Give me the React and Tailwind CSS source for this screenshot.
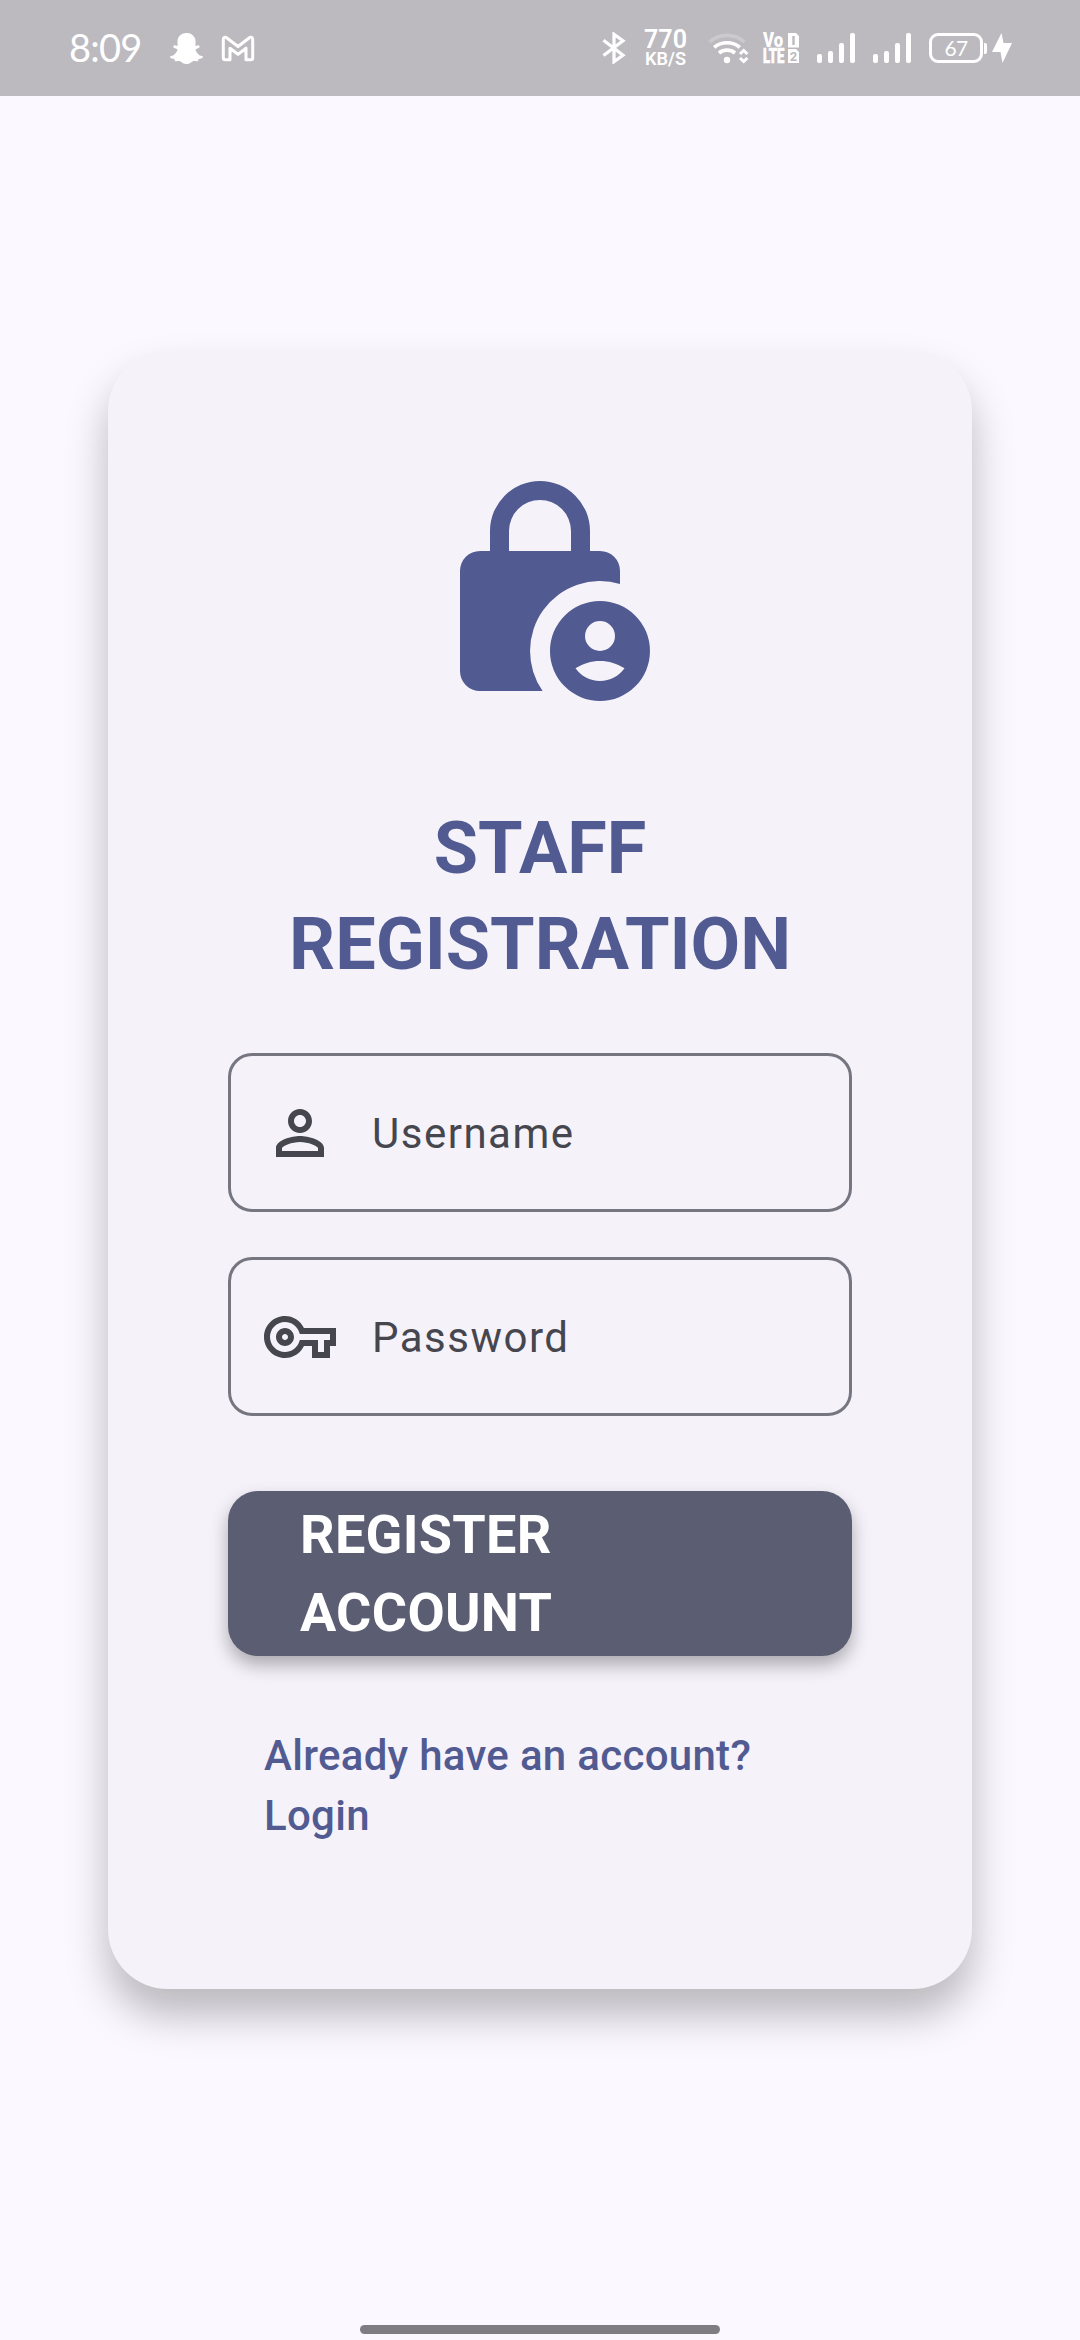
import React from "react";
import { FaSnapchatGhost } from "react-icons/fa";

function GmailIcon() {
  return (
    <svg className="ml-[18px] h-[27px] w-[34px]" viewBox="0 0 34 27" fill="none" stroke="white" strokeWidth="3" strokeLinejoin="round">
      <path d="M2.300 4.200v18.600a2 2 0 0 0 2 2H9V13.200l8 6.200 8-6.200v11.600h4.700a2 2 0 0 0 2-2V4.200c0-1.900-1.800-2.600-3.300-1.500L17 11.500 5.600 2.700C4.100 1.600 2.300 2.300 2.300 4.200z" />
    </svg>
  );
}

function BluetoothIcon() {
  return (
    <svg className="h-[32px] w-[24px]" viewBox="0 0 24 32" fill="none" stroke="white" strokeWidth="3.200">
      <path d="M1.500 8.200 21 23.200l-9 6.500V2.300l9 6.500L1.500 23.500" />
    </svg>
  );
}

function NetworkSpeed() {
  return (
    <svg className="ml-[16px] h-[40px] w-[46px] overflow-visible font-['Roboto']" viewBox="0 0 46 40" fill="white">
      <text x="2" y="20" fontSize="25" fontWeight="600" textLength="43" lengthAdjust="spacingAndGlyphs">770</text>
      <text x="3" y="37" fontSize="19" fontWeight="600" textLength="41" lengthAdjust="spacingAndGlyphs">KB/S</text>
    </svg>
  );
}

function WifiIcon() {
  return (
    <svg className="ml-[20px] h-[32px] w-[42px]" viewBox="0 0 42 32" fill="none" stroke="white" strokeWidth="3.600">
      <path d="M1.500 9.800a27 27 0 0 1 35 0" opacity=".22" />
      <path d="M6.200 15.400a20 20 0 0 1 25.600 0" />
      <path d="M11 21a12.500 12.500 0 0 1 16 0" />
      <circle cx="19" cy="28" r="3.200" fill="white" stroke="none" />
      <path d="m32 22 3.700-3.500 3.700 3.500M32 26l3.700 3.500 3.700-3.500" strokeWidth="3" />
    </svg>
  );
}

function VolteIcon() {
  return (
    <svg className="ml-[12px] h-[32px] w-[38px] overflow-visible font-['Roboto']" viewBox="0 0 38 32" fill="white">
      <g transform="translate(1 15) scale(0.840 1)">
        <text fontSize="20" fontWeight="900">Vo</text>
      </g>
      <g transform="translate(1 31) scale(0.670 1)">
        <text fontSize="19.500" fontWeight="900" stroke="white" strokeWidth="0.700">LTE</text>
      </g>
      <path d="M26 1h8l3 3v11.500H26zM26 17h8l3 3v11H26z" />
      <path d="M31.500 4v9" stroke="#bcbabf" strokeWidth="2.400" />
      <text x="31.500" y="29" fontSize="13" fontWeight="700" textAnchor="middle" fill="#bcbabf">2</text>
    </svg>
  );
}

function SignalBars() {
  return (
    <div className="flex h-[30px] items-end gap-[6px]">
      <span className="h-[9px] w-[5px] rounded-[2px] bg-white" />
      <span className="h-[12px] w-[5px] rounded-[2px] bg-white" />
      <span className="h-[20px] w-[5px] rounded-[2px] bg-white" />
      <span className="h-[30px] w-[5px] rounded-[2px] bg-white" />
    </div>
  );
}

function Battery() {
  return (
    <div className="ml-[18px] flex items-center">
      <div className="flex h-[30px] w-[54px] items-center justify-center rounded-[9px] border-[3px] border-white pb-[2px] font-['Lato'] text-[21px] leading-none tracking-[-0.8px] text-white">
        67
      </div>
      <span className="ml-px h-[11px] w-[3px] rounded-r-[2px] bg-white" />
      <svg className="ml-[5px] h-[30px] w-[20px]" viewBox="0 0 20 30" fill="white">
        <path d="M9.500 0 0 19h8.500L10.500 30 20 10h-8.500z" />
      </svg>
    </div>
  );
}

function StatusBar() {
  return (
    <header className="flex h-24 w-full items-center bg-[#bcbabf] pr-[68px] pl-[69px]">
      <span className="w-[101px] pb-[2px] font-['Lato'] text-[38px] leading-none tracking-[-0.8px] text-white">8:09</span>
      <FaSnapchatGhost className="size-[33px] text-white" />
      <GmailIcon />
      <div className="ml-auto flex items-center">
        <BluetoothIcon />
        <NetworkSpeed />
        <WifiIcon />
        <VolteIcon />
        <div className="ml-[17px] flex gap-[18px]">
          <SignalBars />
          <SignalBars />
        </div>
        <Battery />
      </div>
    </header>
  );
}

function LockPersonIcon() {
  return (
    <svg className="size-[240px] text-[#515b92]" viewBox="0 0 24 24" fill="currentColor">
      <path d="M20 11.290V10a2 2 0 0 0-2-2h-1V6A5 5 0 0 0 7 6v2H6a2 2 0 0 0-2 2v10a2 2 0 0 0 2 2h6.260A7 7 0 0 1 20 11.290zM8.900 6a3.100 3.100 0 0 1 6.200 0v2H8.900z" />
      <path fillRule="evenodd" d="M18 13a5 5 0 1 0 0 10 5 5 0 0 0 0-10zm0 2a1.500 1.500 0 1 1 0 3 1.500 1.500 0 0 1 0-3zm0 6c-1.010 0-1.900-.5-2.450-1.270C16.280 19.270 17.100 19 18 19s1.720.270 2.450.730C19.900 20.500 19.010 21 18 21z" />
    </svg>
  );
}

function PersonIcon() {
  return (
    <svg className="size-[72px]" viewBox="0 0 24 24" fill="currentColor">
      <path d="M12 6c1.100 0 2 .9 2 2s-.9 2-2 2-2-.9-2-2 .9-2 2-2m0 9c2.700 0 5.800 1.290 6 2v1H6v-.99c.2-.72 3.300-2.010 6-2.010m0-11C9.790 4 8 5.790 8 8s1.790 4 4 4 4-1.790 4-4-1.790-4-4-4zm0 9c-2.670 0-8 1.340-8 4v3h16v-3c0-2.660-5.330-4-8-4z" />
    </svg>
  );
}

function KeyIcon() {
  return (
    <svg className="size-[72px]" viewBox="0 0 24 24" fill="currentColor">
      <path d="M22 19h-6v-4h-2.680c-1.140 2.420-3.600 4-6.320 4-3.860 0-7-3.140-7-7s3.140-7 7-7c2.720 0 5.170 1.580 6.320 4H24v6h-2v4zm-4-2h2v-4h2v-2H11.940l-.23-.67C11.010 8.340 9.110 7 7 7c-2.760 0-5 2.240-5 5s2.240 5 5 5c2.110 0 4.010-1.340 4.710-3.330l.23-.67H18v4zM7 15c-1.650 0-3-1.350-3-3s1.350-3 3-3 3 1.350 3 3-1.350 3-3 3zm0-4c-.55 0-1 .45-1 1s.45 1 1 1 1-.45 1-1-.45-1-1-1z" />
    </svg>
  );
}

function Field({ icon, label }) {
  return (
    <div className="flex h-[159px] w-full items-center gap-9 rounded-[24px] border-[3px] border-[#767680] pt-px pl-[33px] text-[#46464f]">
      {icon}
      <span className="pt-[2px] text-[42px] leading-[60px] tracking-[1.5px]">{label}</span>
    </div>
  );
}

export default function App() {
  return (
    <div className="flex h-[2340px] w-[1080px] flex-col items-center bg-[#fbf8ff] font-['Roboto',sans-serif]">
      <StatusBar />
      <main className="mt-[255px] flex h-[1638px] w-[864px] flex-col items-center rounded-[60px] bg-[#f5f2fa] px-[120px] pt-[120px] shadow-[0_26px_42px_rgba(0,0,0,0.26)]">
        <LockPersonIcon />
        <h1 className="mt-[90px] text-center text-[72px] leading-[96px] font-bold text-[#515b92]">
          STAFF
          <br />
          REGISTRATION
        </h1>
        <form className="mt-[60px] flex w-full flex-col">
          <div className="flex flex-col gap-[45px]">
            <Field icon={<PersonIcon />} label="Username" />
            <Field icon={<KeyIcon />} label="Password" />
          </div>
          <button
            type="button"
            className="mt-[75px] flex h-[165px] w-full items-center rounded-[30px] bg-[#5b5d72] px-[72px] text-left text-[54px] leading-[78px] font-bold tracking-[0.3px] text-white shadow-[0_9px_18px_rgba(0,0,0,0.3)]"
          >
            REGISTER
            <br />
            ACCOUNT
          </button>
          <a className="mt-[70px] px-9 text-[42px] leading-[60px] font-medium tracking-[0.3px] text-[#515b92]">
            Already have an account?
            <br />
            Login
          </a>
        </form>
      </main>
      <div className="mt-auto mb-[6px] h-[9px] w-[360px] rounded-full bg-[#807d82]" />
    </div>
  );
}
